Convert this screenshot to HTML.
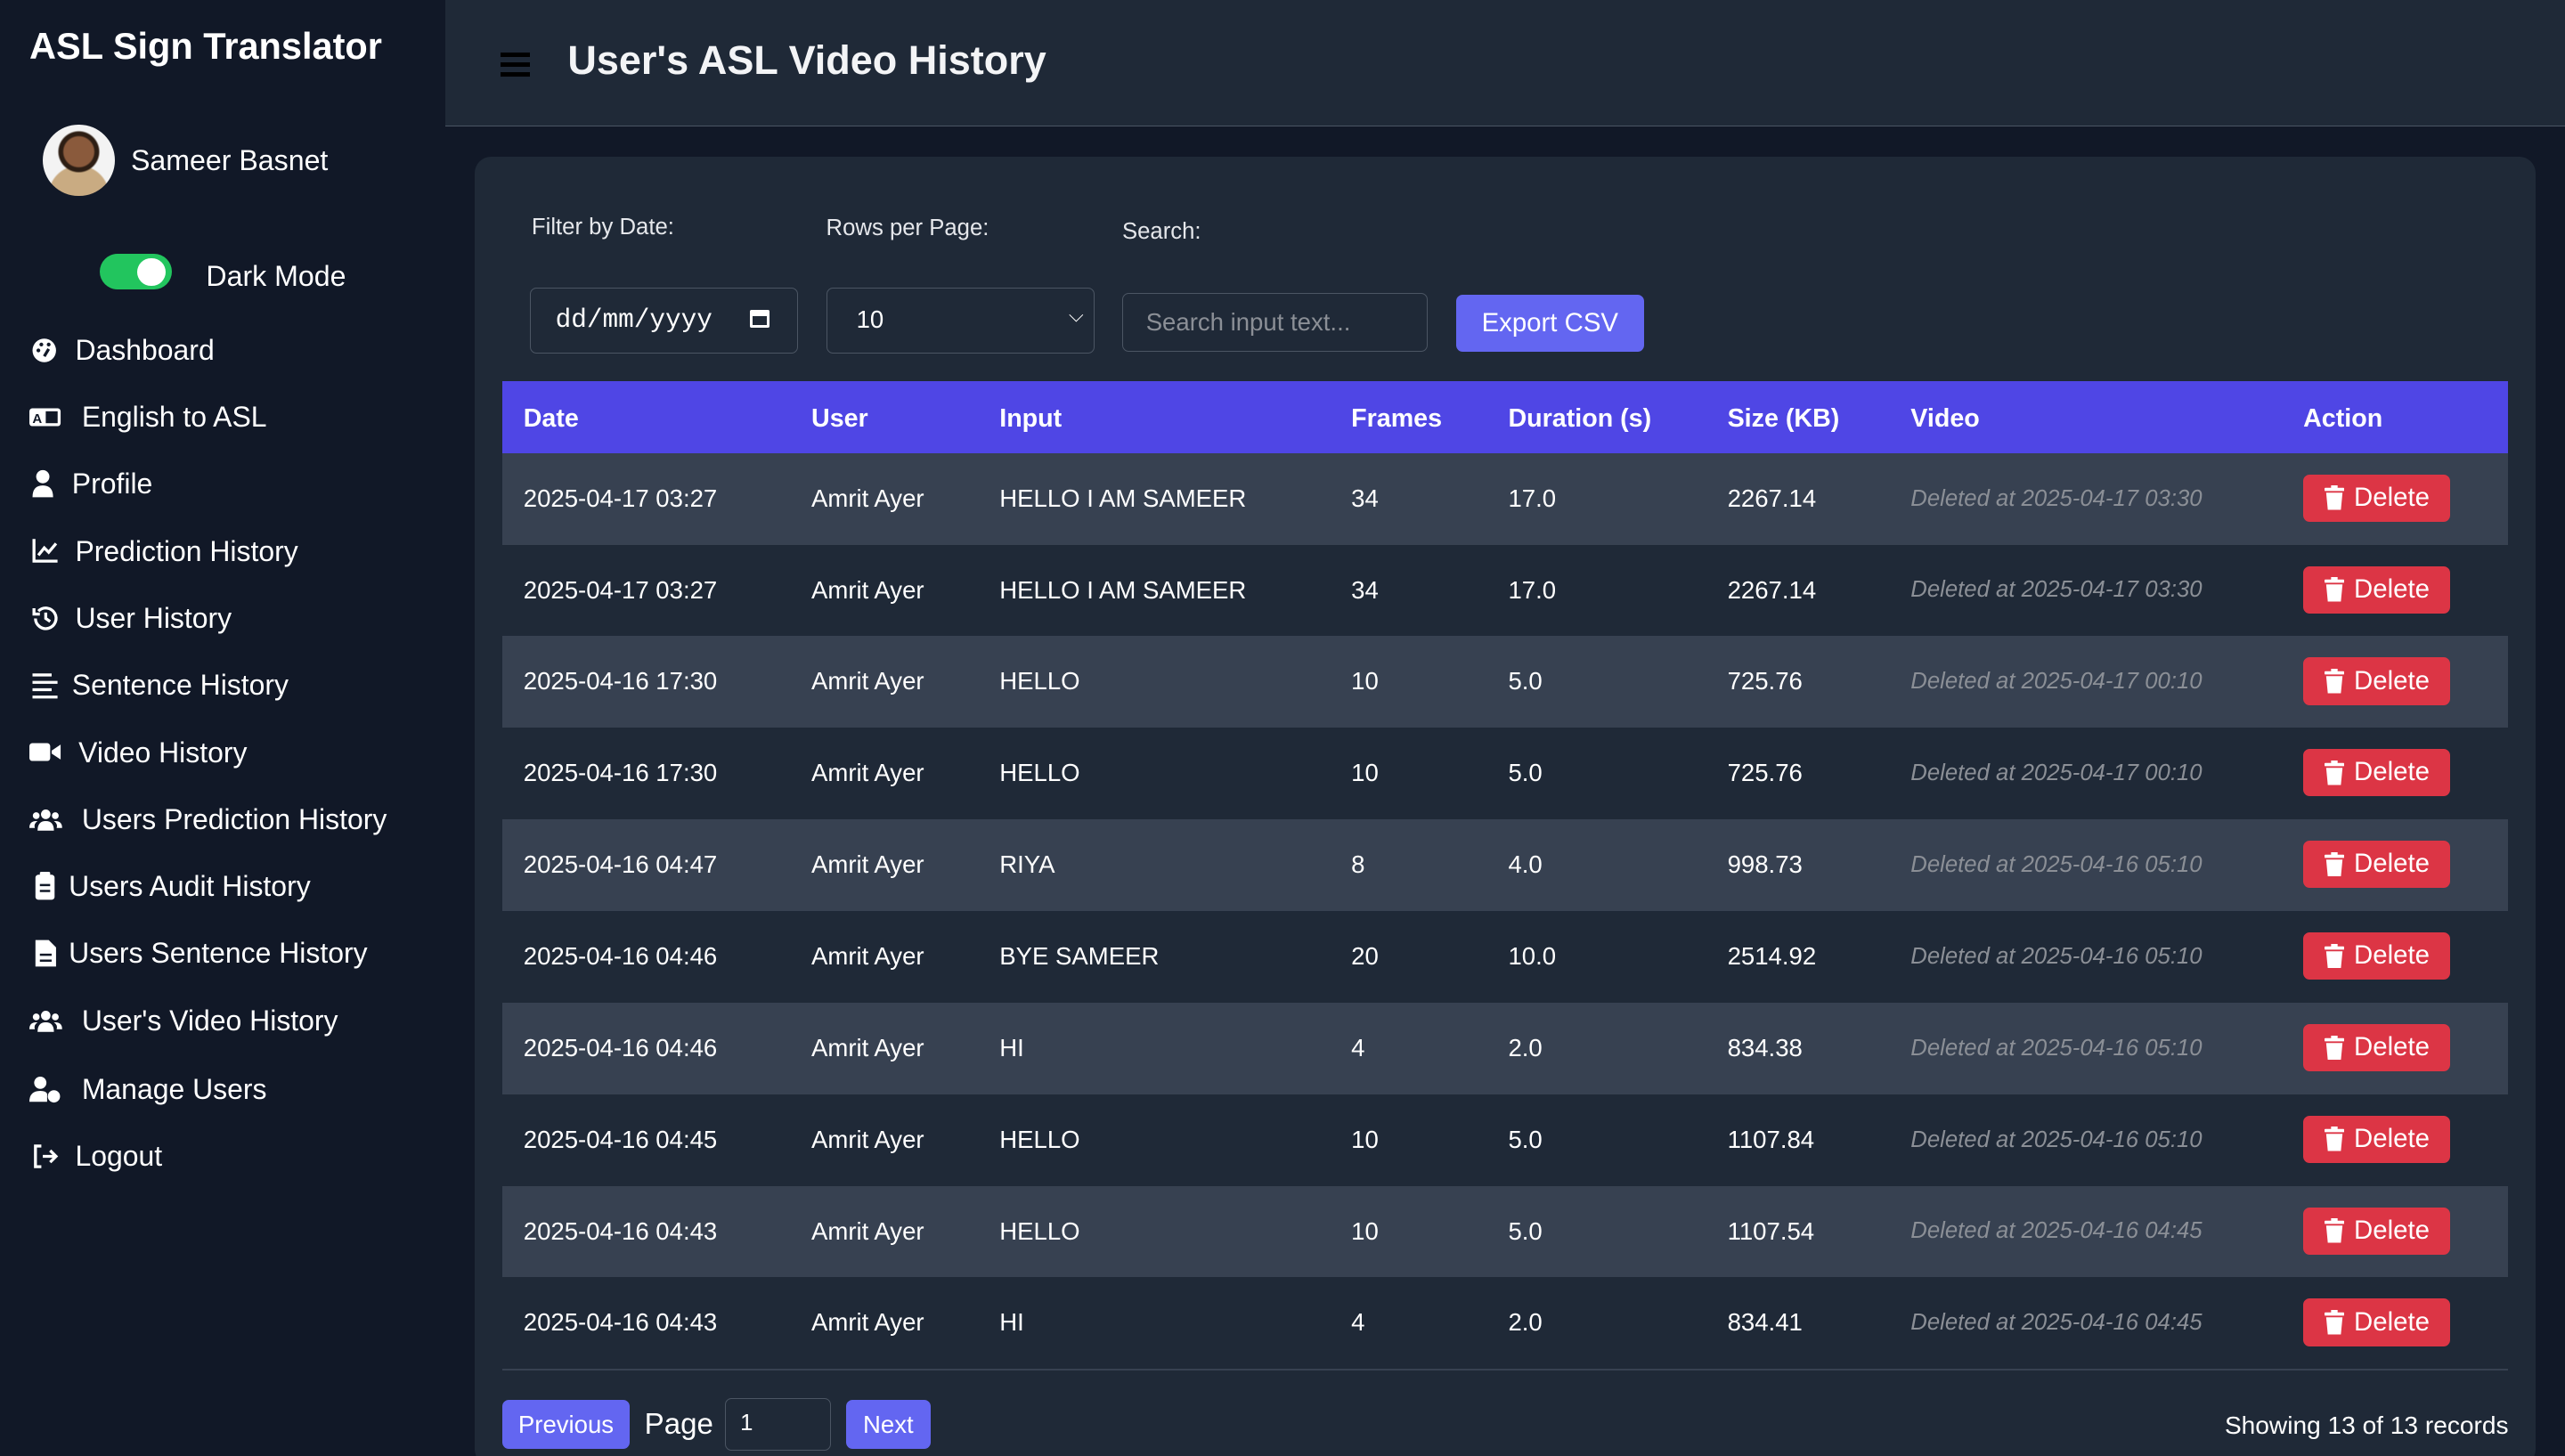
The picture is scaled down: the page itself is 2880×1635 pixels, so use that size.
<!DOCTYPE html>
<html><head><meta charset="utf-8"><style>
html,body{margin:0;padding:0;background:#111827;overflow:hidden}
#r{zoom:1.83673;width:1568px;height:890px;position:relative;font-family:"Liberation Sans",Arial,sans-serif;color:#fff;background:#111827}
.a{position:absolute;white-space:nowrap}
.side{left:0;top:0;width:272px;height:890px;background:#111827}
.nav{font-size:17.4px;left:18px}
.nav svg{position:absolute;left:0;top:1px;width:20px;height:18px}
.nav span{position:absolute;left:28px;top:0}
.top{left:272px;top:0;width:1296px;height:77px;background:#1f2937;border-bottom:1px solid #4b5563}
.card{left:290px;top:96px;width:1260px;height:800px;background:#1f2937;border-radius:10px}
.lbl{font-size:14px;color:#e5e7eb}
.inp{border:1px solid #4b5563;border-radius:4px;background:#1f2937;height:38px;box-sizing:border-box;font-size:15px}
.row{left:307px;width:1226px;height:56px;font-size:15px}
.row div{position:absolute;top:19px}
.del{background:#dc3545;border-radius:4px;width:90px;height:29px;top:13px!important;font-size:16px}
.vid{color:#8b8f96;font-style:italic;font-size:14px}
</style></head><body><div id="r">
<div class="a side"></div>
<div class="a" style="left:18px;top:15px;font-size:22.6px;font-weight:bold">ASL Sign Translator</div>
<div class="a" style="left:26px;top:76px;width:44px;height:44px;border-radius:50%;background:radial-gradient(circle at 50% 38%,#8a5a3c 0 9px,#2d1e14 10px 12px,transparent 13px),radial-gradient(circle at 50% 100%,#c9ab82 0 18px,#f3f3f3 19px)"></div>
<div class="a" style="left:80px;top:88px;font-size:17.5px">Sameer Basnet</div>
<div class="a" style="left:61px;top:155px;width:44px;height:22px;border-radius:11px;background:#22c55e"></div>
<div class="a" style="left:84px;top:158px;width:17px;height:17px;border-radius:50%;background:#fff"></div>
<div class="a" style="left:126px;top:159px;font-size:17.5px">Dark Mode</div>

<div class="a nav" style="top:204px"><svg viewBox="0 0 20 20"><circle cx="9" cy="10" r="8" fill="#fff"/><circle cx="5" cy="10" r="1.3" fill="#111827"/><circle cx="7" cy="6" r="1.3" fill="#111827"/><circle cx="12" cy="6" r="1.3" fill="#111827"/><path d="M9 14 L12 9" stroke="#111827" stroke-width="2"/></svg><span>Dashboard</span></div>
<div class="a nav" style="top:245px"><svg viewBox="0 0 22 18"><rect x="0" y="3" width="21" height="12" rx="2" fill="#fff"/><text x="2" y="13" font-size="9" font-weight="bold" fill="#111827" font-family="Liberation Sans">A</text><rect x="11" y="5" width="8" height="8" fill="#111827"/></svg><span style="left:32px">English to ASL</span></div>
<div class="a nav" style="top:286px"><svg viewBox="0 0 20 20"><circle cx="8" cy="5" r="4.5" fill="#fff"/><path d="M1 19 Q1 11 8 11 Q15 11 15 19Z" fill="#fff"/></svg><span style="left:26px">Profile</span></div>
<div class="a nav" style="top:327px"><svg viewBox="0 0 20 20" fill="none" stroke="#fff" stroke-width="2"><path d="M2 2 V17 H18"/><path d="M5 13 L9 8 L12 11 L17 5"/></svg><span>Prediction History</span></div>
<div class="a nav" style="top:368px"><svg viewBox="0 0 20 20" fill="none" stroke="#fff" stroke-width="2"><path d="M3 10 A7 7 0 1 0 5 5"/><path d="M2 3 V7 H6"/><path d="M10 6 V10 L13 12"/></svg><span>User History</span></div>
<div class="a nav" style="top:409px"><svg viewBox="0 0 20 20" stroke="#fff" stroke-width="2"><path d="M1 3H14M1 8H18M1 13H14M1 18H18"/></svg><span style="left:26px">Sentence History</span></div>
<div class="a nav" style="top:450px"><svg viewBox="0 0 22 18"><rect x="0" y="3" width="14" height="12" rx="2" fill="#fff"/><path d="M15 8 L21 4 V14 L15 10Z" fill="#fff"/></svg><span style="left:30px">Video History</span></div>
<div class="a nav" style="top:491px"><svg viewBox="0 0 24 20" fill="#fff"><circle cx="12" cy="6" r="3.5"/><circle cx="5" cy="7" r="2.5"/><circle cx="19" cy="7" r="2.5"/><path d="M6 18 Q6 11 12 11 Q18 11 18 18Z M0 16 Q0 11 5 11 L6 11 Q3 13 4 16Z M24 16 Q24 11 19 11 L18 11 Q21 13 20 16Z"/></svg><span style="left:32px">Users Prediction History</span></div>
<div class="a nav" style="top:532px"><svg viewBox="0 0 16 20"><rect x="1" y="2" width="13" height="17" rx="2" fill="#fff"/><rect x="4" y="0" width="7" height="4" rx="1" fill="#fff"/><path d="M4 9H11M4 13H11" stroke="#111827" stroke-width="1.5"/></svg><span style="left:24px">Users Audit History</span></div>
<div class="a nav" style="top:573px"><svg viewBox="0 0 16 20"><path d="M1 1H10L15 6V19H1Z" fill="#fff"/><path d="M4 11H12M4 15H12" stroke="#111827" stroke-width="1.5"/></svg><span style="left:24px">Users Sentence History</span></div>
<div class="a nav" style="top:614px"><svg viewBox="0 0 24 20" fill="#fff"><circle cx="12" cy="6" r="3.5"/><circle cx="5" cy="7" r="2.5"/><circle cx="19" cy="7" r="2.5"/><path d="M6 18 Q6 11 12 11 Q18 11 18 18Z M0 16 Q0 11 5 11 L6 11 Q3 13 4 16Z M24 16 Q24 11 19 11 L18 11 Q21 13 20 16Z"/></svg><span style="left:32px">User's Video History</span></div>
<div class="a nav" style="top:656px"><svg viewBox="0 0 24 20" fill="#fff"><circle cx="8" cy="5" r="4.5"/><path d="M0 19 Q0 11 8 11 Q12 11 13 13 V19Z"/><circle cx="18" cy="15" r="4.5"/></svg><span style="left:32px">Manage Users</span></div>
<div class="a nav" style="top:697px"><svg viewBox="0 0 20 20" fill="none" stroke="#fff" stroke-width="2"><path d="M7 3H3V17H7"/><path d="M8 10H17M13 6L17 10L13 14"/></svg><span>Logout</span></div>

<div class="a top"></div>
<div class="a" style="left:306px;top:32px;width:18px;height:3px;background:#000;box-shadow:0 6px 0 #000,0 12px 0 #000"></div>
<div class="a" style="left:347px;top:23px;font-size:24.5px;font-weight:bold;color:#f3f4f6">User's ASL Video History</div>

<div class="a card"></div>
<div class="a lbl" style="left:325px;top:131px">Filter by Date:</div>
<div class="a lbl" style="left:505px;top:132px">Rows per Page:</div>
<div class="a lbl" style="left:686px;top:134px">Search:</div>
<div class="a inp" style="left:324px;top:176px;width:164px;height:40px;font-family:'Liberation Mono',monospace;font-size:16px;padding:10px 15px">dd/mm/yyyy<span style="position:absolute;right:17px;top:13px;width:12px;height:11px;border:2px solid #fff;border-top-width:4px;box-sizing:border-box;border-radius:1px"></span></div>
<div class="a inp" style="left:505px;top:176px;width:164px;height:40px;padding:10px 18px">10<span style="position:absolute;right:6px;top:9px;font-size:12px">⌵</span></div>
<div class="a inp" style="left:686px;top:179px;width:187px;height:36px;padding:9px 14px;color:#8b8f96">Search input text...</div>
<div class="a" style="left:890px;top:180px;width:115px;height:35px;background:#6366f1;border-radius:4px;font-size:16px;text-align:center;line-height:35px">Export CSV</div>

<div class="a" style="left:307px;top:233px;width:1226px;height:44px;background:#4f46e5;font-weight:bold;font-size:15.6px">
<div class="a" style="left:13px;top:14px">Date</div><div class="a" style="left:189px;top:14px">User</div><div class="a" style="left:304px;top:14px">Input</div><div class="a" style="left:519px;top:14px">Frames</div><div class="a" style="left:615px;top:14px">Duration (s)</div><div class="a" style="left:749px;top:14px">Size (KB)</div><div class="a" style="left:861px;top:14px">Video</div><div class="a" style="left:1101px;top:14px">Action</div></div>

<div id="rows"></div>
<div class="a" style="left:307px;top:837px;width:1226px;height:1px;background:#374151"></div>
<div class="a" style="left:307px;top:856px;width:78px;height:30px;background:#6366f1;border-radius:4px;font-size:15px;text-align:center;line-height:30px">Previous</div>
<div class="a" style="left:394px;top:861px;font-size:18px">Page</div>
<div class="a inp" style="left:443px;top:855px;width:65px;height:32px;padding:7px 9px;font-size:14px">1</div>
<div class="a" style="left:517px;top:856px;width:52px;height:30px;background:#6366f1;border-radius:4px;font-size:15px;text-align:center;line-height:30px">Next</div>
<div class="a" style="left:1360px;top:863px;font-size:15.3px">Showing 13 of 13 records</div>
</div>
<script>
var d=[["2025-04-17 03:27","HELLO I AM SAMEER","34","17.0","2267.14","2025-04-17 03:30"],["2025-04-17 03:27","HELLO I AM SAMEER","34","17.0","2267.14","2025-04-17 03:30"],["2025-04-16 17:30","HELLO","10","5.0","725.76","2025-04-17 00:10"],["2025-04-16 17:30","HELLO","10","5.0","725.76","2025-04-17 00:10"],["2025-04-16 04:47","RIYA","8","4.0","998.73","2025-04-16 05:10"],["2025-04-16 04:46","BYE SAMEER","20","10.0","2514.92","2025-04-16 05:10"],["2025-04-16 04:46","HI","4","2.0","834.38","2025-04-16 05:10"],["2025-04-16 04:45","HELLO","10","5.0","1107.84","2025-04-16 05:10"],["2025-04-16 04:43","HELLO","10","5.0","1107.54","2025-04-16 04:45"],["2025-04-16 04:43","HI","4","2.0","834.41","2025-04-16 04:45"]];
var h="";d.forEach(function(r,i){h+='<div class="a row" style="top:'+(277+i*56)+'px;background:'+(i%2?'#1f2937':'#374151')+'"><div style="left:13px">'+r[0]+'</div><div style="left:189px">Amrit Ayer</div><div style="left:304px">'+r[1]+'</div><div style="left:519px">'+r[2]+'</div><div style="left:615px">'+r[3]+'</div><div style="left:749px">'+r[4]+'</div><div class="vid" style="left:861px;top:20px">Deleted at '+r[5]+'</div><div class="del" style="left:1101px"><svg style="position:absolute;left:13px;top:7px" width="12" height="15" viewBox="0 0 12 15" fill="#fff"><rect x="0" y="1.5" width="12" height="2" rx="0.5"/><rect x="4" y="0" width="4" height="2"/><path d="M1 4.5H11L10 15H2Z"/></svg><span style="position:absolute;left:31px;top:5px">Delete</span></div></div>'});
document.getElementById("rows").innerHTML=h;
</script>
</body></html>
